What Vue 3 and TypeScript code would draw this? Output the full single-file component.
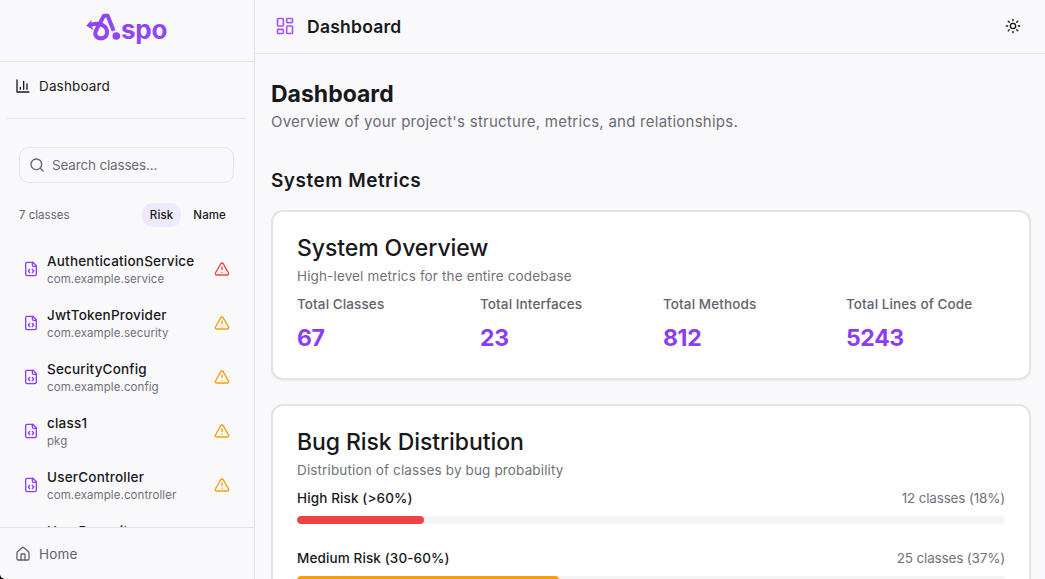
<script setup lang="ts">
import { ref, computed } from 'vue'

interface ClassItem {
  name: string
  pkg: string
  risk: number
}

const classes: ClassItem[] = [
  { name: 'AuthenticationService', pkg: 'com.example.service', risk: 75 },
  { name: 'JwtTokenProvider', pkg: 'com.example.security', risk: 58 },
  { name: 'SecurityConfig', pkg: 'com.example.config', risk: 52 },
  { name: 'class1', pkg: 'pkg', risk: 45 },
  { name: 'UserController', pkg: 'com.example.controller', risk: 40 },
  { name: 'UserRepository', pkg: 'com.example.repository', risk: 12 },
  { name: 'UserService', pkg: 'com.example.service', risk: 10 },
]

const query = ref('')
const sortBy = ref<'Risk' | 'Name'>('Risk')
const sortKeys = ['Risk', 'Name'] as const

const visibleClasses = computed(() =>
  classes
    .filter((c) => c.name.toLowerCase().includes(query.value.toLowerCase()))
    .sort((a, b) => (sortBy.value === 'Risk' ? b.risk - a.risk : a.name.localeCompare(b.name))),
)

const metrics = [
  { label: 'Total Classes', value: 67 },
  { label: 'Total Interfaces', value: 23 },
  { label: 'Total Methods', value: 812 },
  { label: 'Total Lines of Code', value: 5243 },
]

const risks = [
  { label: 'High Risk (>60%)', count: 12, percent: 18, tone: 'red' },
  { label: 'Medium Risk (30-60%)', count: 25, percent: 37, tone: 'amber' },
]
</script>

<template>
  <div class="app">
    <aside class="sidebar">
      <div class="brand">
        <svg class="mark" width="35" height="32" viewBox="0 0 105 96" fill="none">
          <path
            d="M12 37 C30 28 56 33 62 50 C67 66 57 76 45 76 C32 76 25 66 29 55 C34 43 47 22 54 8 L65 8 L83 53"
            stroke="currentColor" stroke-width="12" stroke-linejoin="round"
          />
          <path d="M1 38 L17 20 L15 34 L22 51 Z" fill="currentColor" />
          <circle cx="91" cy="69" r="11.5" fill="currentColor" />
        </svg>
        <span class="wordmark">spo</span>
      </div>

      <nav class="nav">
        <a class="nav-link">
          <svg class="icon" viewBox="0 0 24 24">
            <path d="M3 3v18h18M18 17V9M13 17V5M8 17v-3" />
          </svg>
          <span>Dashboard</span>
        </a>
      </nav>

      <div class="browser">
        <label class="search">
          <svg class="icon" viewBox="0 0 24 24">
            <circle cx="11" cy="11" r="8" />
            <path d="m21 21-4.3-4.3" />
          </svg>
          <input v-model="query" type="text" placeholder="Search classes..." />
        </label>
        <div class="sort">
          <span class="count">{{ classes.length }} classes</span>
          <button
            v-for="key in sortKeys" :key="key"
            :class="['sort-btn', { active: sortBy === key }]"
            @click="sortBy = key"
          >{{ key }}</button>
        </div>
        <ul class="list">
          <li v-for="item in visibleClasses" :key="item.name" class="item">
            <svg class="icon file" viewBox="0 0 24 24">
              <path d="M15 2H6a2 2 0 0 0-2 2v16a2 2 0 0 0 2 2h12a2 2 0 0 0 2-2V7Z" />
              <path d="M14 2v4a2 2 0 0 0 2 2h4M10 12.5 8 15l2 2.5M14 12.5l2 2.5-2 2.5" />
            </svg>
            <div class="item-text">
              <div class="item-name">{{ item.name }}</div>
              <div class="item-pkg">{{ item.pkg }}</div>
            </div>
            <svg v-if="item.risk >= 30" :class="['icon', item.risk > 60 ? 'high' : 'medium']" viewBox="0 0 24 24">
              <path d="m21.73 18-8-14a2 2 0 0 0-3.48 0l-8 14A2 2 0 0 0 4 21h16a2 2 0 0 0 1.73-3" />
              <path d="M12 9v4M12 17h.01" />
            </svg>
          </li>
        </ul>
      </div>

      <footer class="side-footer">
        <a class="nav-link muted">
          <svg class="icon" viewBox="0 0 24 24">
            <path d="M15 21v-8a1 1 0 0 0-1-1h-4a1 1 0 0 0-1 1v8" />
            <path d="M3 10a2 2 0 0 1 .709-1.528l7-5.999a2 2 0 0 1 2.582 0l7 5.999A2 2 0 0 1 21 10v9a2 2 0 0 1-2 2H5a2 2 0 0 1-2-2z" />
          </svg>
          <span>Home</span>
        </a>
      </footer>
    </aside>

    <main class="main">
      <header class="topbar">
        <svg class="icon grid-icon" viewBox="0 0 24 24">
          <rect width="7" height="9" x="3" y="3" rx="1" />
          <rect width="7" height="5" x="14" y="3" rx="1" />
          <rect width="7" height="9" x="14" y="12" rx="1" />
          <rect width="7" height="5" x="3" y="16" rx="1" />
        </svg>
        <span class="topbar-title">Dashboard</span>
        <svg class="icon sun" viewBox="0 0 24 24">
          <circle cx="12" cy="12" r="4" />
          <path d="M12 2v2M12 20v2M4.93 4.93l1.41 1.41M17.66 17.66l1.41 1.41M2 12h2M20 12h2M6.34 17.66l-1.41 1.41M19.07 4.93l-1.41 1.41" />
        </svg>
      </header>

      <div class="content">
        <h1>Dashboard</h1>
        <p class="lead">Overview of your project's structure, metrics, and relationships.</p>
        <h2>System Metrics</h2>

        <section class="card">
          <h3>System Overview</h3>
          <p class="desc">High-level metrics for the entire codebase</p>
          <div class="metrics">
            <div v-for="m in metrics" :key="m.label">
              <div class="metric-label">{{ m.label }}</div>
              <div class="metric-value">{{ m.value }}</div>
            </div>
          </div>
        </section>

        <section class="card">
          <h3>Bug Risk Distribution</h3>
          <p class="desc">Distribution of classes by bug probability</p>
          <div v-for="r in risks" :key="r.label" class="risk">
            <div class="risk-head">
              <span>{{ r.label }}</span>
              <span class="risk-count">{{ r.count }} classes ({{ r.percent }}%)</span>
            </div>
            <div class="track">
              <div :class="['fill', r.tone]" :style="{ width: r.percent + '%' }"></div>
            </div>
          </div>
        </section>
      </div>
    </main>
  </div>
</template>

<style>
html, body { margin: 0; overflow: hidden; background: #000; }
</style>

<style scoped>
* { box-sizing: border-box; margin: 0; padding: 0; }
.app {
  display: flex;
  height: 579px;
  overflow: hidden;
  background: #f9f9fb;
  border-bottom-left-radius: 5px;
  color: #18181b;
  font-family: Inter, "Liberation Sans", sans-serif;
  font-size: 13.5px;
}
.icon {
  flex: none;
  width: 16px;
  height: 16px;
  fill: none;
  stroke: currentColor;
  stroke-width: 2;
  stroke-linecap: round;
  stroke-linejoin: round;
}
.sidebar {
  display: flex;
  flex: none;
  flex-direction: column;
  width: 255px;
  border-right: 1px solid #e4e4e7;
}
.brand {
  display: flex;
  flex: none;
  align-items: flex-start;
  height: 62px;
  padding: 13px 0 0 86px;
  border-bottom: 1px solid #e4e4e7;
  color: #9046f0;
}
.wordmark {
  font-size: 26px;
  font-weight: 700;
  line-height: 34px;
  letter-spacing: -0.2px;
}
.nav {
  flex: none;
  height: 57px;
  margin: 0 8px 0 7px;
  padding: 14px 0 0 8px;
  border-bottom: 1px solid #e4e4e7;
}
.nav-link { display: flex; align-items: center; gap: 8px; height: 20px; letter-spacing: 0.15px; }
.muted { color: #62626d; }
.browser {
  flex: 1;
  min-height: 0;
  overflow: hidden;
  padding: 28px 20px 0 19px;
}
.search {
  display: flex;
  align-items: center;
  gap: 7px;
  height: 36px;
  padding: 0 9px;
  border: 1px solid #e4e4e7;
  border-radius: 10px;
  color: #62626d;
}
.search input {
  flex: 1;
  min-width: 0;
  border: 0;
  outline: 0;
  background: transparent;
  color: #18181b;
  font: inherit;
  letter-spacing: -0.17px;
}
.search input::placeholder { color: #6b6b76; opacity: 1; }
.sort { display: flex; align-items: center; height: 24px; margin-top: 20px; font-size: 11.5px; }
.count { flex: 1; color: #62626d; }
.sort-btn {
  height: 24px;
  padding: 0 8px;
  border: 0;
  border-radius: 10px;
  background: transparent;
  color: #18181b;
  font: inherit;
  font-weight: 500;
  letter-spacing: 0.12px;
}
.sort-btn + .sort-btn { margin-left: 4px; }
.active { background: #efeafb; }
.list { margin-top: 15px; list-style: none; }
.item { display: flex; align-items: center; gap: 8px; height: 54px; padding: 0 4px; }
.item-text { flex: 1; }
.item-name { font-weight: 450; line-height: 20px; letter-spacing: 0.2px; }
.item-pkg { color: #71717a; font-size: 11.5px; line-height: 16px; letter-spacing: 0.08px; }
.file { color: #8b3df5; }
.high { color: #ef4444; }
.medium { color: #f59e0b; }
.side-footer {
  flex: none;
  height: 52px;
  padding: 16px 15px;
  border-top: 1px solid #e4e4e7;
}
.main { flex: 1; min-width: 0; }
.topbar {
  display: flex;
  align-items: center;
  height: 54px;
  padding: 0 24px 1px 20px;
  border-bottom: 1px solid #e4e4e7;
}
.grid-icon { width: 20px; height: 20px; color: #a855f7; }
.topbar-title { flex: 1; margin-left: 12px; font-size: 17.5px; font-weight: 600; letter-spacing: 0.25px; }
.content { padding: 24px 14px 0 16px; }
h1 { font-size: 23px; font-weight: 700; line-height: 32px; }
.lead { color: #6b6b76; font-size: 15px; line-height: 24px; letter-spacing: 0.25px; }
h2 { margin: 32px 0 16px; padding-top: 1px; font-size: 19px; font-weight: 600; line-height: 27px; letter-spacing: 0.5px; }
.card {
  margin-bottom: 24px;
  padding: 24px;
  border: 2px solid #e4e4e7;
  border-radius: 12px;
  background: #fff;
  box-shadow: 0 1px 2px rgb(0 0 0 / 0.05);
}
h3 { font-size: 23px; font-weight: 550; line-height: 24px; letter-spacing: -0.08px; }
.desc { margin: 6px 0 8px; color: #71717a; line-height: 20px; letter-spacing: 0.14px; }
.metrics { display: grid; grid-template-columns: repeat(4, 1fr); gap: 24px; }
.metric-label { color: #62626d; font-weight: 450; line-height: 20px; letter-spacing: 0.1px; }
.metric-value { margin-top: 8px; color: #8b3df5; font-size: 23px; font-weight: 700; line-height: 32px; letter-spacing: -0.35px; }
.risk { margin-bottom: 24px; }
.risk-head { display: flex; justify-content: space-between; line-height: 20px; font-weight: 450; letter-spacing: 0.12px; }
.risk-count { color: #71717a; font-weight: 400; letter-spacing: -0.17px; }
.track { height: 8px; margin-top: 8px; border-radius: 4px; overflow: hidden; background: #f4f4f5; }
.fill { height: 100%; border-radius: 4px; }
.red { background: #ef4444; }
.amber { background: #f59e0b; }
</style>
